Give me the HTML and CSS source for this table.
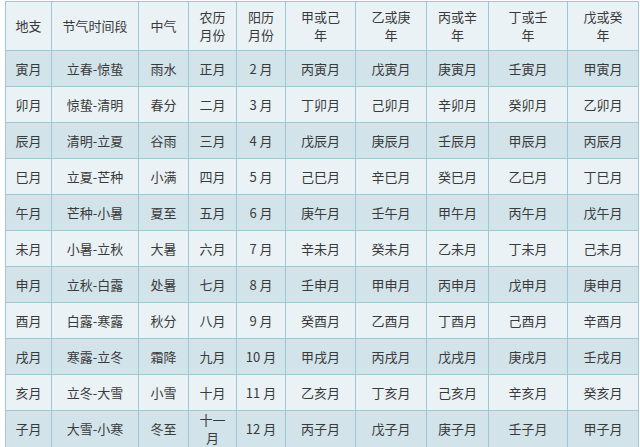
FILE: index.html
```html
<!DOCTYPE html>
<html lang="zh">
<head>
<meta charset="utf-8">
<link rel="stylesheet" href="styles.css">
</head>
<body>
<table class="cal">
<colgroup>
<col class="c1"><col class="c2"><col class="c3"><col class="c4"><col class="c5"><col class="c6"><col class="c7"><col class="c8"><col class="c9"><col class="c10">
</colgroup>
<thead>
<tr class="head"><th>地支</th><th>节气时间段</th><th>中气</th><th>农历<br>月份</th><th>阳历<br>月份</th><th>甲或己<br>年</th><th>乙或庚<br>年</th><th>丙或辛<br>年</th><th>丁或壬<br>年</th><th>戊或癸<br>年</th></tr>
</thead>
<tbody>
<tr class="dark"><td>寅月</td><td>立春-惊蛰</td><td>雨水</td><td>正月</td><td>2 月</td><td>丙寅月</td><td>戊寅月</td><td>庚寅月</td><td>壬寅月</td><td>甲寅月</td></tr>
<tr class="light"><td>卯月</td><td>惊蛰-清明</td><td>春分</td><td>二月</td><td>3 月</td><td>丁卯月</td><td>己卯月</td><td>辛卯月</td><td>癸卯月</td><td>乙卯月</td></tr>
<tr class="dark"><td>辰月</td><td>清明-立夏</td><td>谷雨</td><td>三月</td><td>4 月</td><td>戊辰月</td><td>庚辰月</td><td>壬辰月</td><td>甲辰月</td><td>丙辰月</td></tr>
<tr class="light"><td>巳月</td><td>立夏-芒种</td><td>小满</td><td>四月</td><td>5 月</td><td>己巳月</td><td>辛巳月</td><td>癸巳月</td><td>乙巳月</td><td>丁巳月</td></tr>
<tr class="dark"><td>午月</td><td>芒种-小暑</td><td>夏至</td><td>五月</td><td>6 月</td><td>庚午月</td><td>壬午月</td><td>甲午月</td><td>丙午月</td><td>戊午月</td></tr>
<tr class="light"><td>未月</td><td>小暑-立秋</td><td>大暑</td><td>六月</td><td>7 月</td><td>辛未月</td><td>癸未月</td><td>乙未月</td><td>丁未月</td><td>己未月</td></tr>
<tr class="dark"><td>申月</td><td>立秋-白露</td><td>处暑</td><td>七月</td><td>8 月</td><td>壬申月</td><td>甲申月</td><td>丙申月</td><td>戊申月</td><td>庚申月</td></tr>
<tr class="light"><td>酉月</td><td>白露-寒露</td><td>秋分</td><td>八月</td><td>9 月</td><td>癸酉月</td><td>乙酉月</td><td>丁酉月</td><td>己酉月</td><td>辛酉月</td></tr>
<tr class="dark"><td>戌月</td><td>寒露-立冬</td><td>霜降</td><td>九月</td><td>10 月</td><td>甲戌月</td><td>丙戌月</td><td>戊戌月</td><td>庚戌月</td><td>壬戌月</td></tr>
<tr class="light"><td>亥月</td><td>立冬-大雪</td><td>小雪</td><td>十月</td><td>11 月</td><td>乙亥月</td><td>丁亥月</td><td>己亥月</td><td>辛亥月</td><td>癸亥月</td></tr>
<tr class="dark"><td>子月</td><td>大雪-小寒</td><td>冬至</td><td class="wrap">十一<br>月</td><td>12 月</td><td>丙子月</td><td>戊子月</td><td>庚子月</td><td>壬子月</td><td>甲子月</td></tr>
</tbody>
</table>
</body>
</html>
```
FILE: styles.css
```css
html, body {
  margin: 0;
  padding: 0;
  background: #ffffff;
}
body {
  padding: 1px 0 0 5px;
  font-family: "Noto Sans CJK SC", "Noto Sans", sans-serif;
  overflow: hidden;
}
.cal {
  border-collapse: collapse;
  table-layout: fixed;
  width: 633px;
  font-size: 13px;
  color: #3a3a3a;
}
.c1 { width: 46px; }
.c2 { width: 87px; }
.c3 { width: 50px; }
.c4 { width: 48px; }
.c5 { width: 49px; }
.c6 { width: 70px; }
.c7 { width: 71px; }
.c8 { width: 62px; }
.c9 { width: 79px; }
.c10 { width: 71px; }
.cal th, .cal td {
  border: 1px solid #9fc8d4;
  text-align: center;
  vertical-align: middle;
  padding: 0;
  font-weight: normal;
  line-height: 18px;
}
.head th {
  height: 48px;
  background: #eaf2f6;
}
.cal td {
  height: 35px;
}
.dark td { background: #d2e3ea; }
.light td { background: #eaf2f5; }
```
